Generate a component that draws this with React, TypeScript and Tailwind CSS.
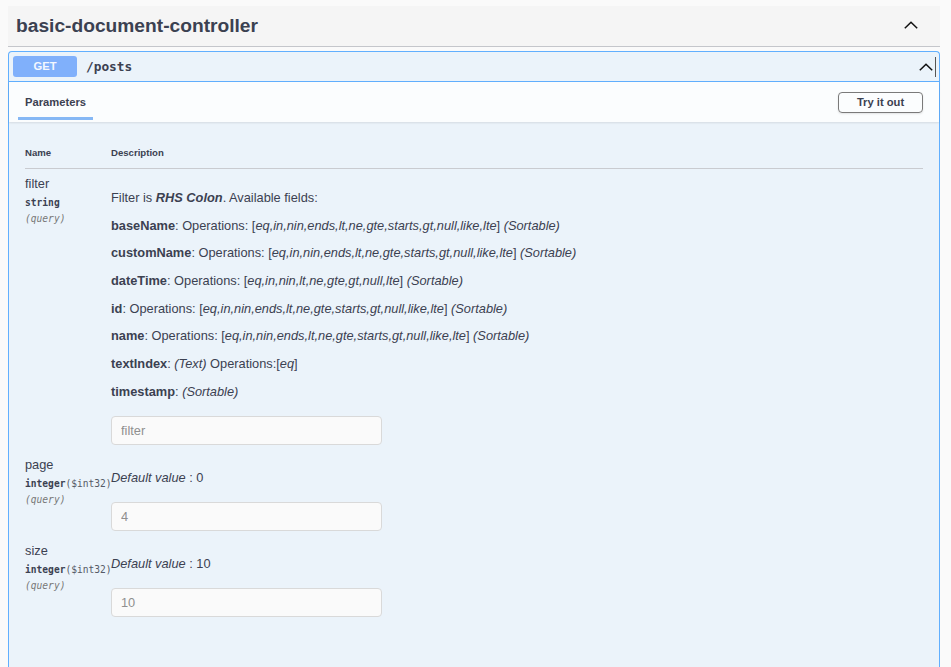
import React from "react";

const Chevron = ({ className = "" }: { className?: string }) => (
  <svg width="14" height="8" viewBox="0 0 14 8" className={className} fill="none">
    <polyline points="0.8,7.3 7,1.2 13.2,7.3" stroke="#111" strokeWidth="1.5" strokeLinejoin="miter" />
  </svg>
);

type Seg = { t: string; s?: "b" | "i" | "bi" };

const Line = ({ segs }: { segs: Seg[] }) => (
  <p className="leading-[16px] whitespace-nowrap">
    {segs.map((g, i) =>
      g.s === "b" ? (
        <strong key={i} className="font-bold">{g.t}</strong>
      ) : g.s === "i" ? (
        <em key={i} className="italic">{g.t}</em>
      ) : g.s === "bi" ? (
        <strong key={i} className="font-bold italic">{g.t}</strong>
      ) : (
        <span key={i}>{g.t}</span>
      )
    )}
  </p>
);

const ops12 = "eq,in,nin,ends,lt,ne,gte,starts,gt,null,like,lte";

const fieldLine = (name: string, ops: string): Seg[] => [
  { t: name, s: "b" },
  { t: ": Operations: [" },
  { t: ops, s: "i" },
  { t: "] " },
  { t: "(Sortable)", s: "i" },
];

const Input = ({ ph }: { ph: string }) => (
  <input
    placeholder={ph}
    className="mt-[16px] w-[271px] h-[29px] rounded-[4px] border border-[#d9d9d9] bg-[#fafafa] pl-[9px] text-[12.8px] outline-none placeholder:text-[#8f8f8f]"
  />
);

const NameCol = ({ name, type, fmt }: { name: string; type: string; fmt?: string }) => (
  <div className="flex flex-col">
    <div className="text-[12.8px] leading-[16px]">{name}</div>
    <div className="mt-[3px] leading-[15px] text-[9.6px] font-bold font-['DejaVu_Sans_Mono',monospace] whitespace-nowrap">
      {type}
      {fmt && <span className="font-normal text-[#555a66]">{fmt}</span>}
    </div>
    <div className="mt-[1px] leading-[15px] text-[9.6px] italic text-[#777] font-['DejaVu_Sans_Mono',monospace]">
      (query)
    </div>
  </div>
);

export default function App() {
  return (
    <div className="min-h-screen bg-[#fafafa] pt-[6px] font-['Liberation_Sans',Arial,sans-serif] text-[#3b4151]">
      <div className="ml-[8px] w-[932px]">
        {/* Tag header */}
        <div className="flex h-[41px] items-center justify-between border-b border-[#c4c6cb] bg-[#f5f5f5] pl-[8px] pr-[22px]">
          <h3 className="text-[19.2px] font-bold leading-[24px]">basic-document-controller</h3>
          <Chevron className="mb-[2px]" />
        </div>

        {/* Opblock */}
        <div className="mt-[4px] rounded-t-[4px] border border-b-0 border-[#61affe] bg-[#ebf3fa] pb-[60px]">
          {/* Summary */}
          <div className="flex items-center border-b border-[#61affe] py-[4px] pl-[4px] pr-[3px]">
            <div className="flex h-[21px] w-[64px] items-center justify-center rounded-[3px] bg-[#80b0fb] text-[11.2px] font-bold text-[#f4f8ff]">
              GET
            </div>
            <div className="ml-[9px] font-['DejaVu_Sans_Mono',monospace] text-[12.8px] font-bold">/posts</div>
            <div className="ml-auto flex items-center">
              <Chevron />
              <div className="ml-[2px] h-[20px] w-[1px] bg-[#555]" />
            </div>
          </div>

          {/* Section header */}
          <div className="flex h-[40px] items-center justify-between bg-white/80 pl-[9px] pr-[16px] shadow-[0_1px_2px_rgba(0,0,0,0.1)]">
            <div className="relative flex h-full items-center px-[7px]">
              <span className="text-[11.2px] font-bold">Parameters</span>
              <div className="absolute bottom-[2px] left-0 right-0 h-[3px] bg-[#86b8f5]" />
            </div>
            <button className="flex h-[21px] w-[85px] items-center justify-center rounded-[4px] border border-[#7a7a7a] bg-transparent text-[11.2px] font-bold shadow-[0_1px_2px_rgba(0,0,0,0.1)]">
              Try it out
            </button>
          </div>

          {/* Parameters table */}
          <div className="px-[16px] pt-[24px]">
            <div className="grid grid-cols-[86px_1fr] border-b border-[#c9cbd0] pb-[8px] text-[9.6px] font-bold leading-[14px]">
              <div>Name</div>
              <div>Description</div>
            </div>

            <div className="flex flex-col gap-[12px] pt-[7px]">
              {/* filter */}
              <div className="grid grid-cols-[86px_1fr]">
                <NameCol name="filter" type="string" />
                <div className="flex flex-col pt-[14px] text-[12.8px]">
                  <div className="flex flex-col gap-[11.7px]">
                    <Line
                      segs={[
                        { t: "Filter is " },
                        { t: "RHS Colon", s: "bi" },
                        { t: ". Available fields:" },
                      ]}
                    />
                    <Line segs={fieldLine("baseName", ops12)} />
                    <Line segs={fieldLine("customName", ops12)} />
                    <Line segs={fieldLine("dateTime", "eq,in,nin,lt,ne,gte,gt,null,lte")} />
                    <Line segs={fieldLine("id", ops12)} />
                    <Line segs={fieldLine("name", ops12)} />
                    <Line
                      segs={[
                        { t: "textIndex", s: "b" },
                        { t: ": " },
                        { t: "(Text)", s: "i" },
                        { t: " Operations:[" },
                        { t: "eq", s: "i" },
                        { t: "]" },
                      ]}
                    />
                    <Line segs={[{ t: "timestamp", s: "b" }, { t: ": " }, { t: "(Sortable)", s: "i" }]} />
                  </div>
                  <Input ph="filter" />
                </div>
              </div>

              {/* page */}
              <div className="grid grid-cols-[86px_1fr]">
                <NameCol name="page" type="integer" fmt="($int32)" />
                <div className="flex flex-col pt-[13px] text-[12.8px]">
                  <Line segs={[{ t: "Default value", s: "i" }, { t: " : 0" }]} />
                  <Input ph="4" />
                </div>
              </div>

              {/* size */}
              <div className="grid grid-cols-[86px_1fr]">
                <NameCol name="size" type="integer" fmt="($int32)" />
                <div className="flex flex-col pt-[13px] text-[12.8px]">
                  <Line segs={[{ t: "Default value", s: "i" }, { t: " : 10" }]} />
                  <Input ph="10" />
                </div>
              </div>
            </div>
          </div>
        </div>
      </div>
    </div>
  );
}
